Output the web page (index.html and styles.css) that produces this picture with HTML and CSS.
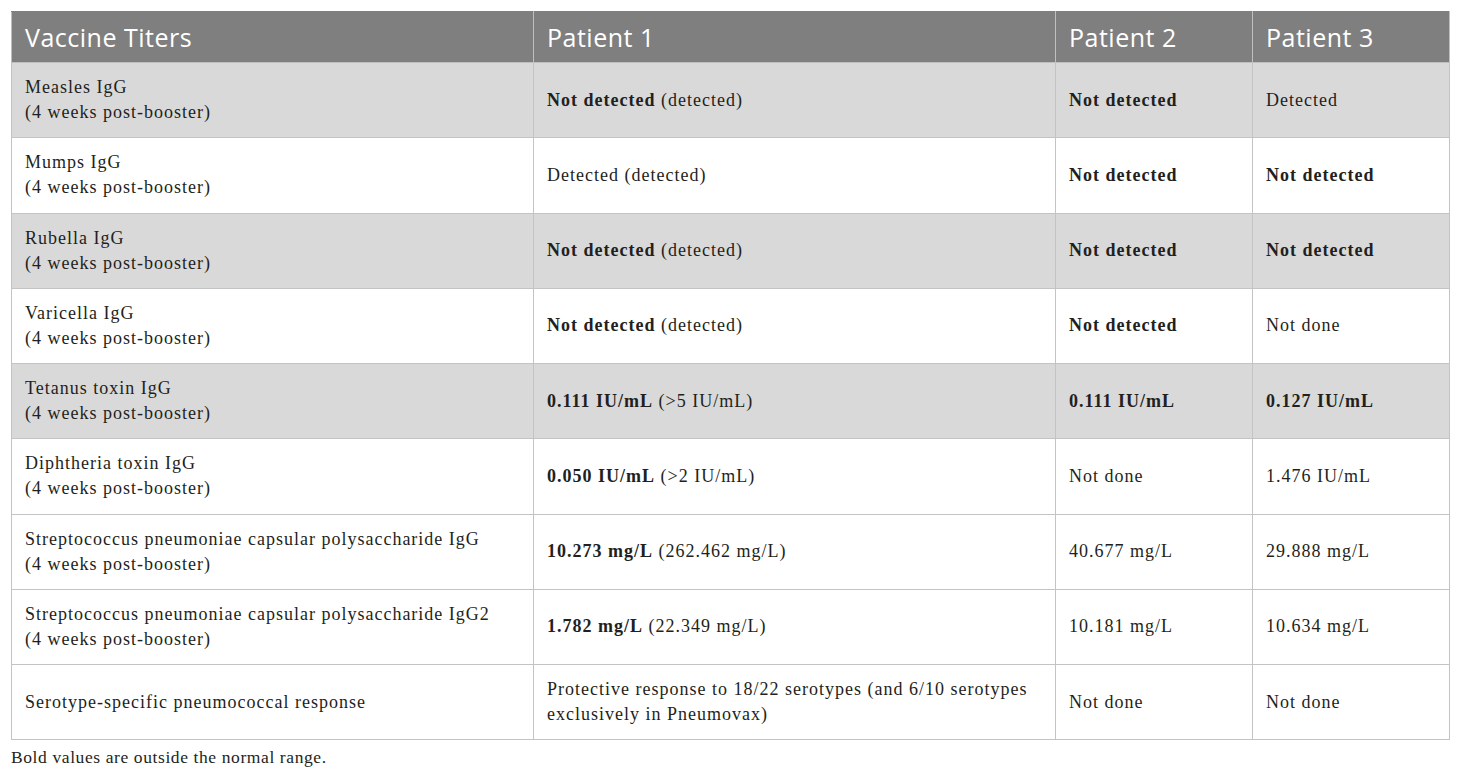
FILE: index.html
```html
<!DOCTYPE html>
<html lang="en">
<head>
<meta charset="utf-8">
<title>Vaccine Titers</title>
<link rel="stylesheet" href="styles.css">
</head>
<body>
<div class="wrap">
<table class="titers">
  <colgroup>
    <col class="c1"><col class="c2"><col class="c3"><col class="c4">
  </colgroup>
  <thead>
    <tr><th>Vaccine Titers</th><th>Patient 1</th><th>Patient 2</th><th>Patient 3</th></tr>
  </thead>
  <tbody>
    <tr class="shade"><td>Measles IgG<br>(4 weeks post-booster)</td><td><b>Not detected</b> (detected)</td><td><b>Not detected</b></td><td>Detected</td></tr>
    <tr><td>Mumps IgG<br>(4 weeks post-booster)</td><td>Detected (detected)</td><td><b>Not detected</b></td><td><b>Not detected</b></td></tr>
    <tr class="shade"><td>Rubella IgG<br>(4 weeks post-booster)</td><td><b>Not detected</b> (detected)</td><td><b>Not detected</b></td><td><b>Not detected</b></td></tr>
    <tr><td>Varicella IgG<br>(4 weeks post-booster)</td><td><b>Not detected</b> (detected)</td><td><b>Not detected</b></td><td>Not done</td></tr>
    <tr class="shade"><td>Tetanus toxin IgG<br>(4 weeks post-booster)</td><td><b>0.111 IU/mL</b> (&gt;5 IU/mL)</td><td><b>0.111 IU/mL</b></td><td><b>0.127 IU/mL</b></td></tr>
    <tr><td>Diphtheria toxin IgG<br>(4 weeks post-booster)</td><td><b>0.050 IU/mL</b> (&gt;2 IU/mL)</td><td>Not done</td><td>1.476 IU/mL</td></tr>
    <tr><td>Streptococcus pneumoniae capsular polysaccharide IgG<br>(4 weeks post-booster)</td><td><b>10.273 mg/L</b> (262.462 mg/L)</td><td>40.677 mg/L</td><td>29.888 mg/L</td></tr>
    <tr><td>Streptococcus pneumoniae capsular polysaccharide IgG2<br>(4 weeks post-booster)</td><td><b>1.782 mg/L</b> (22.349 mg/L)</td><td>10.181 mg/L</td><td>10.634 mg/L</td></tr>
    <tr><td>Serotype-specific pneumococcal response</td><td>Protective response to 18/22 serotypes (and 6/10 serotypes exclusively in Pneumovax)</td><td>Not done</td><td>Not done</td></tr>
  </tbody>
</table>
<p class="note">Bold values are outside the normal range.</p>
</div>
</body>
</html>
```

FILE: styles.css
```css
html, body {
  margin: 0;
  padding: 0;
  background: #ffffff;
}
.wrap {
  padding: 11px 11px 0 11px;
}
.titers {
  width: 1438px;
  border-collapse: collapse;
  table-layout: fixed;
  font-family: "Liberation Serif", "Times New Roman", serif;
  font-size: 18px;
  letter-spacing: 1px;
  color: #231f20;
}
.c1 { width: 522px; }
.c2 { width: 522px; }
.c3 { width: 197px; }
.c4 { width: 197px; }
.titers th {
  background: #7f7f7f;
  color: #ffffff;
  font-family: "Open Sans", "Lato", sans-serif;
  font-weight: 400;
  font-size: 25px;
  letter-spacing: 0.5px;
  text-align: left;
  height: 51px;
  padding: 0 13px;
  border: 1px solid #bfbfbf;
  border-top-color: #7f7f7f;
  vertical-align: middle;
  box-sizing: border-box;
}
.titers td {
  border: 1px solid #c4c4c4;
  padding: 0 12px 0 13px;
  height: 75.25px;
  line-height: 25px;
  vertical-align: middle;
  box-sizing: border-box;
}
.titers tr.shade td {
  background: #d9d9d9;
}
.titers b {
  font-weight: 700;
}
.note {
  margin: 7px 0 0 0;
  font-family: "Liberation Serif", "Times New Roman", serif;
  font-size: 17.5px;
  letter-spacing: 0.6px;
  color: #231f20;
}
```
